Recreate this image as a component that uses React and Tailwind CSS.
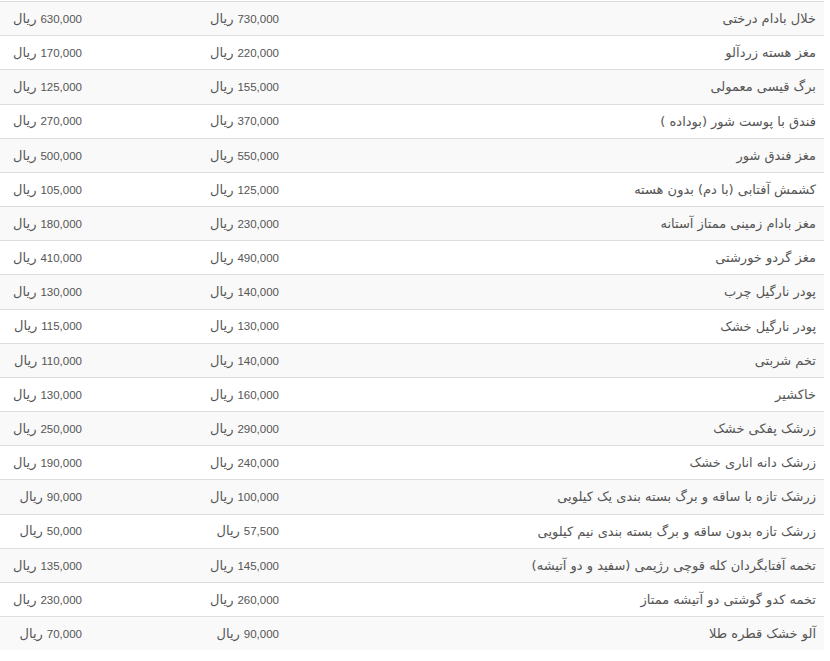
import React from "react";

const rows = [
  ["خلال بادام درختی", "730,000", "630,000"],
  ["مغز هسته زردآلو", "220,000", "170,000"],
  ["برگ قیسی معمولی", "155,000", "125,000"],
  ["فندق با پوست شور (بوداده )", "370,000", "270,000"],
  ["مغز فندق شور", "550,000", "500,000"],
  ["کشمش آفتابی (با دم) بدون هسته", "125,000", "105,000"],
  ["مغز بادام زمینی ممتاز آستانه", "230,000", "180,000"],
  ["مغز گردو خورشتی", "490,000", "410,000"],
  ["پودر نارگیل چرب", "140,000", "130,000"],
  ["پودر نارگیل خشک", "130,000", "115,000"],
  ["تخم شربتی", "140,000", "110,000"],
  ["خاکشیر", "160,000", "130,000"],
  ["زرشک پفکی خشک", "290,000", "250,000"],
  ["زرشک دانه اناری خشک", "240,000", "190,000"],
  ["زرشک تازه با ساقه و برگ بسته بندی یک کیلویی", "100,000", "90,000"],
  ["زرشک تازه بدون ساقه و برگ بسته بندی نیم کیلویی", "57,500", "50,000"],
  ["تخمه آفتابگردان کله قوچی رژیمی (سفید و دو آتیشه)", "145,000", "135,000"],
  ["تخمه کدو گوشتی دو آتیشه ممتاز", "260,000", "230,000"],
  ["آلو خشک قطره طلا", "90,000", "70,000"],
];

function Price({ v }) {
  return (
    <span className="inline-flex items-baseline gap-[4px]">
      <span className="font-['Liberation_Sans',sans-serif] text-[11.5px]" dir="ltr">{v}</span>
      <span className="font-['DejaVu_Sans',sans-serif] text-[13px]">ریال</span>
    </span>
  );
}

export default function App() {
  return (
    <div className="w-[830px] h-[661px] bg-white pt-px">
      <div dir="rtl" className="w-[824px] text-[#555555] font-['DejaVu_Sans',sans-serif] leading-none">
        {rows.map((r, i) => (
          <div
            key={i}
            className={`flex h-[34.18px] items-center border-t border-[#dddddd] ${i % 2 === 0 ? "bg-[#f9f9f9]" : "bg-white"}`}
          >
            <div className="w-[537px] px-2 text-right text-[13px]">{r[0]}</div>
            <div className="w-[197px] px-2 flex justify-start"><Price v={r[1]} /></div>
            <div className="w-[90px] px-2 flex justify-start"><Price v={r[2]} /></div>
          </div>
        ))}
      </div>
    </div>
  );
}
